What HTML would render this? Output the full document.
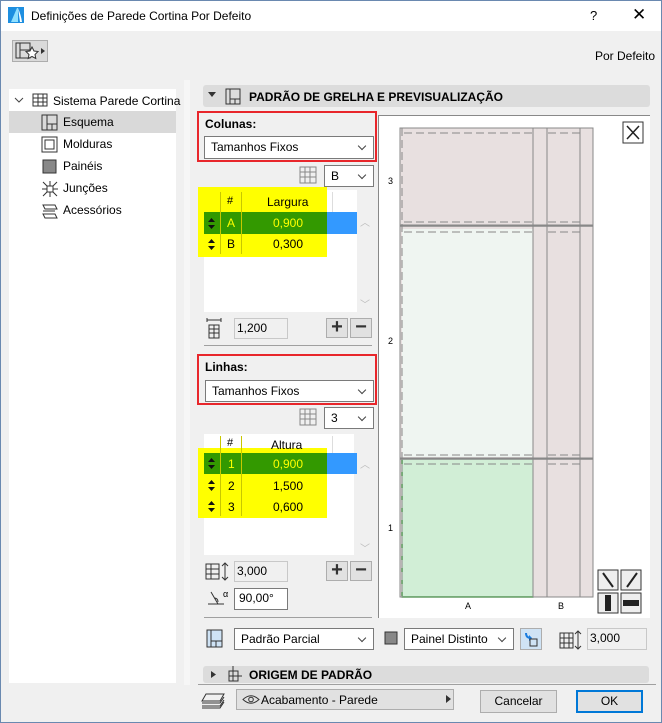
<!DOCTYPE html>
<html><head><meta charset="utf-8"><style>
*{box-sizing:border-box;margin:0;padding:0}
body{width:662px;height:723px;overflow:hidden;background:#f0f0f0;font-family:"Liberation Sans",sans-serif;font-size:12px;color:#000;position:relative}
.a{position:absolute}
.dd{position:absolute;background:#fff;border:1px solid #7a7a7a;padding-left:6px;line-height:20px;font-size:12px}
.dd:after{content:"";position:absolute;right:8px;top:6px;width:5px;height:5px;border-right:1px solid #444;border-bottom:1px solid #444;transform:rotate(45deg)}
.inp{position:absolute;border:1px solid #c8c8c8;background:#f0f0f0;line-height:19px;padding-left:2px;font-size:12px}
.btn{position:absolute;border:1px solid #adadad;background:#e1e1e1;text-align:center}
.t{position:absolute;font-size:12px;white-space:nowrap}
.red{position:absolute;border:2px solid #e8262b}
.pm{position:absolute;width:22px;height:20px;border:1px solid #adadad;background:#e1e1e1;font-size:20px;line-height:17px;text-align:center;font-weight:bold;color:#333}
.ar{position:absolute;width:7px;height:11px}
</style></head><body>
<div class="a" style="left:0;top:0;width:662px;height:31px;background:#fff"></div>
<svg class="a" style="left:8px;top:7px" width="16" height="16"><rect width="16" height="16" fill="#1e8fe0"/><path d="M3 15 L9 1 L10 1 L10 15Z" fill="#8fe0ff"/><path d="M10 1 Q13 8 14 15 L12 15Z" fill="#fff"/></svg>
<div class="t" style="left:31px;top:9px;font-size:12px">Definições de Parede Cortina Por Defeito</div>
<div class="t" style="left:590px;top:8px;font-size:13px">?</div>
<div class="t" style="left:632px;top:5px;font-size:17px">✕</div>
<div class="a" style="left:0;top:0;width:662px;height:723px;border:1px solid #6a89b0;pointer-events:none;z-index:9"></div>
<div class="a" style="left:12px;top:40px;width:36px;height:22px;border:1px solid #adadad;background:#dadada"></div>
<svg class="a" style="left:15px;top:42px" width="32" height="18"><rect x="1" y="1" width="14" height="15" fill="none" stroke="#333"/><path d="M5 1V16M5 8H15" stroke="#333" fill="none"/><path d="M17 5l2 4 4 .5-3 3 .8 4-3.8-2-3.8 2 .8-4-3-3 4-.5z" fill="#fff" stroke="#333"/><path d="M26 6l4 3-4 3z" fill="#333"/></svg>
<div class="t" style="left:595px;top:49px">Por Defeito</div>
<div class="a" style="left:9px;top:89px;width:167px;height:594px;background:#fff"></div>
<div class="a" style="left:184px;top:80px;width:6px;height:605px;background:#f6f6f6"></div>
<div class="a" style="left:9px;top:111px;width:167px;height:22px;background:#d9d9d9"></div>
<svg class="a" style="left:14px;top:96px" width="10" height="8"><path d="M1 2l4 4 4-4" stroke="#444" fill="none"/></svg>
<svg class="a" style="left:31px;top:92px" width="18" height="16"><path d="M2 2H16V14H2Z M2 6H16M2 10H16M7 2V14M12 2V14" stroke="#333" fill="none"/></svg>
<div class="t" style="left:53px;top:94px">Sistema Parede Cortina</div>
<svg class="a" style="left:41px;top:114px" width="18" height="18"><path d="M1 1H16V16H1Z M6 1V16M6 10H16M11 10V16" stroke="#333" fill="none"/></svg>
<div class="t" style="left:63px;top:115px">Esquema</div>
<svg class="a" style="left:41px;top:136px" width="18" height="18"><rect x="1" y="1" width="15" height="15" fill="none" stroke="#333"/><rect x="4" y="4" width="9" height="9" fill="none" stroke="#333"/></svg>
<div class="t" style="left:63px;top:137px">Molduras</div>
<svg class="a" style="left:41px;top:158px" width="18" height="18"><rect x="2" y="2" width="13" height="13" fill="#888" stroke="#333"/></svg>
<div class="t" style="left:63px;top:159px">Painéis</div>
<svg class="a" style="left:41px;top:180px" width="18" height="18"><path d="M2 2L16 16M16 2L2 16M9 1V17M1 9H17" stroke="#333"/><rect x="6" y="6" width="6" height="6" fill="#fff" stroke="#333"/></svg>
<div class="t" style="left:63px;top:181px">Junções</div>
<svg class="a" style="left:41px;top:202px" width="18" height="18"><path d="M2 3H14L16 7H4ZM2 9H14M2 12H14L16 16H4Z" stroke="#333" fill="none"/></svg>
<div class="t" style="left:63px;top:203px">Acessórios</div>
<div class="a" style="left:203px;top:85px;width:447px;height:22px;background:#dcdcdc;border-radius:3px"></div>
<svg class="a" style="left:208px;top:92px" width="8" height="6"><path d="M0 0H8L4 5Z" fill="#333"/></svg>
<svg class="a" style="left:225px;top:88px" width="16" height="17"><path d="M1 1H15V16H1ZM5 1V16M5 11H15M10 11V16" stroke="#333" fill="none"/></svg>
<div class="t" style="left:249px;top:90px;font-weight:bold">PADRÃO DE GRELHA E PREVISUALIZAÇÃO</div>
<div class="red" style="left:197px;top:111px;width:180px;height:51px"></div>
<div class="t" style="left:205px;top:117px;font-weight:bold">Colunas:</div>
<div class="dd" style="left:204px;top:136px;width:170px;height:23px">Tamanhos Fixos</div>
<svg class="a" style="left:299px;top:166px" width="18" height="18"><path d="M1 1H17V17H1ZM1 6H17M1 11H17M6 1V17M11 1V17" stroke="#888" fill="none"/></svg>
<div class="dd" style="left:324px;top:165px;width:50px;height:22px">B</div>
<div class="a" style="left:204px;top:190px;width:153px;height:122px;background:#fff"></div>
<div class="a" style="left:198px;top:187px;width:129px;height:70px;background:#ffff00"></div>
<div class="a" style="left:204px;top:212px;width:123px;height:22px;background:#339900"></div>
<div class="a" style="left:327px;top:212px;width:30px;height:22px;background:#3399ff"></div>
<div class="a" style="left:220px;top:192px;width:1px;height:62px;background:#c8c800"></div>
<div class="a" style="left:241px;top:192px;width:1px;height:62px;background:#c8c800"></div>
<div class="a" style="left:332px;top:192px;width:1px;height:20px;background:#ddd"></div>
<div class="t" style="left:227px;top:195px;font-size:11px">#</div>
<div class="t" style="left:267px;top:195px">Largura</div>
<svg class="ar" style="left:208px;top:218px" viewBox="0 0 7 11"><path d="M0 4L3.5 0 7 4ZM0 7L3.5 11 7 7Z" fill="#111"/></svg>
<div class="t" style="left:227px;top:216px;color:#ff0">A</div>
<div class="t" style="left:273px;top:216px;color:#ff0">0,900</div>
<svg class="ar" style="left:208px;top:239px" viewBox="0 0 7 11"><path d="M0 4L3.5 0 7 4ZM0 7L3.5 11 7 7Z" fill="#111"/></svg>
<div class="t" style="left:227px;top:237px">B</div>
<div class="t" style="left:273px;top:237px">0,300</div>
<div class="t" style="left:360px;top:214px;color:#bbb;font-size:10px">︿</div>
<div class="t" style="left:360px;top:296px;color:#bbb;font-size:10px">﹀</div>
<svg class="a" style="left:206px;top:317px" width="18" height="22"><path d="M1 3H15M1 1V5M15 1V5M3 8H13V21H3ZM3 12H13M3 16H13M8 8V21" stroke="#333" fill="none"/></svg>
<div class="inp" style="left:234px;top:318px;width:54px;height:21px">1,200</div>
<div class="pm" style="left:326px;top:318px">+</div>
<div class="pm" style="left:350px;top:318px">−</div>
<div class="a" style="left:204px;top:345px;width:168px;height:1px;background:#a0a0a0"></div>
<div class="red" style="left:197px;top:354px;width:180px;height:51px"></div>
<div class="t" style="left:205px;top:360px;font-weight:bold">Linhas:</div>
<div class="dd" style="left:205px;top:380px;width:169px;height:22px">Tamanhos Fixos</div>
<svg class="a" style="left:299px;top:408px" width="18" height="18"><path d="M1 1H17V17H1ZM1 6H17M1 11H17M6 1V17M11 1V17" stroke="#888" fill="none"/></svg>
<div class="dd" style="left:324px;top:407px;width:50px;height:22px">3</div>
<div class="a" style="left:204px;top:434px;width:150px;height:121px;background:#fff"></div>
<div class="a" style="left:198px;top:448px;width:129px;height:70px;background:#ffff00"></div>
<div class="a" style="left:204px;top:453px;width:123px;height:21px;background:#339900"></div>
<div class="a" style="left:327px;top:453px;width:30px;height:21px;background:#3399ff"></div>
<div class="a" style="left:220px;top:436px;width:1px;height:80px;background:#c8c800"></div>
<div class="a" style="left:241px;top:436px;width:1px;height:80px;background:#c8c800"></div>
<div class="a" style="left:332px;top:436px;width:1px;height:17px;background:#ddd"></div>
<div class="t" style="left:227px;top:437px;font-size:11px">#</div>
<div class="t" style="left:271px;top:438px">Altura</div>
<svg class="ar" style="left:208px;top:458px" viewBox="0 0 7 11"><path d="M0 4L3.5 0 7 4ZM0 7L3.5 11 7 7Z" fill="#111"/></svg>
<div class="t" style="left:228px;top:457px;color:#ff0">1</div>
<div class="t" style="left:273px;top:457px;color:#ff0">0,900</div>
<svg class="ar" style="left:208px;top:480px" viewBox="0 0 7 11"><path d="M0 4L3.5 0 7 4ZM0 7L3.5 11 7 7Z" fill="#111"/></svg>
<div class="t" style="left:228px;top:479px">2</div>
<div class="t" style="left:273px;top:479px">1,500</div>
<svg class="ar" style="left:208px;top:501px" viewBox="0 0 7 11"><path d="M0 4L3.5 0 7 4ZM0 7L3.5 11 7 7Z" fill="#111"/></svg>
<div class="t" style="left:228px;top:500px">3</div>
<div class="t" style="left:273px;top:500px">0,600</div>
<div class="t" style="left:360px;top:456px;color:#bbb;font-size:10px">︿</div>
<div class="t" style="left:360px;top:540px;color:#bbb;font-size:10px">﹀</div>
<svg class="a" style="left:205px;top:562px" width="26" height="20"><path d="M1 2H14V17H1ZM1 7H14M1 12H14M6 2V17M20 1V18M17 4L20 1 23 4M17 15L20 18 23 15" stroke="#333" fill="none"/></svg>
<div class="inp" style="left:234px;top:561px;width:54px;height:21px">3,000</div>
<div class="pm" style="left:326px;top:561px">+</div>
<div class="pm" style="left:350px;top:561px">−</div>
<svg class="a" style="left:205px;top:588px" width="26" height="20"><path d="M3 16H19M6 4L13 16M9 10Q13 10 13 14" stroke="#333" fill="none"/><text x="18" y="9" font-size="9" font-family="Liberation Sans">α</text></svg>
<div class="inp" style="left:234px;top:588px;width:54px;height:22px;background:#fff;border-color:#7a7a7a;padding-left:4px">90,00°</div>
<div class="a" style="left:204px;top:617px;width:168px;height:1px;background:#a0a0a0"></div>
<div class="a" style="left:378px;top:115px;width:272px;height:503px;background:#fff;border-left:1px solid #888;border-top:1px solid #888"></div>
<svg class="a" style="left:380px;top:115px" width="270" height="500">
<rect x="20" y="13" width="193" height="469" fill="#e8e0e0" stroke="#888"/>
<rect x="22" y="17" width="131" height="93" fill="#e8e0e0"/>
<rect x="22" y="114" width="131" height="228" fill="#eff5f1"/>
<rect x="22" y="344" width="131" height="138" fill="#d1eed6" stroke="#1a6b1a"/>
<path d="M153 13V482M167 13V482M200 13V482M20 110H213M20 343H213" stroke="#888"/>
<path d="M20 111H213M20 344H213" stroke="#888" stroke-width="1.5"/>
<g stroke="#888" stroke-dasharray="8,4" fill="none"><path d="M22 13V482M24 18H153M24 107H153M24 117H153M24 340H153M24 349H153M168 18H200M168 107H200M168 117H200M168 340H200M168 349H200"/></g>
<text x="8" y="69" font-size="9" font-family="Liberation Sans">3</text>
<text x="8" y="229" font-size="9" font-family="Liberation Sans">2</text>
<text x="8" y="416" font-size="9" font-family="Liberation Sans">1</text>
<text x="85" y="494" font-size="9" font-family="Liberation Sans">A</text>
<text x="178" y="494" font-size="9" font-family="Liberation Sans">B</text>
<rect x="243" y="7" width="20" height="21" fill="#fff" stroke="#333"/><path d="M247 11L259 24M259 11L247 24" stroke="#222" stroke-width="1.5"/>
<g stroke="#333" fill="#eee"><rect x="218" y="455" width="20" height="20"/><rect x="241" y="455" width="20" height="20"/><rect x="218" y="478" width="20" height="20"/><rect x="241" y="478" width="20" height="20"/></g>
<path d="M223 458L233 472M257 458L247 472" stroke="#222" stroke-width="2"/>
<rect x="225" y="480" width="6" height="16" fill="#222"/><rect x="243" y="485" width="16" height="6" fill="#222"/>
</svg>
<svg class="a" style="left:206px;top:629px" width="18" height="20"><rect x="1" y="1" width="15" height="17" fill="#cfe3f5" stroke="#333"/><path d="M5 1V18M5 12H16M10 12V18" stroke="#333" fill="none"/></svg>
<div class="dd" style="left:234px;top:628px;width:140px;height:22px">Padrão Parcial</div>
<svg class="a" style="left:383px;top:630px" width="16" height="16"><rect x="2" y="2" width="12" height="12" fill="#888" stroke="#333"/></svg>
<div class="dd" style="left:404px;top:628px;width:110px;height:22px">Painel Distinto</div>
<div class="a" style="left:520px;top:628px;width:22px;height:22px;border:1px solid #adadad;background:#cfe3f5"></div>
<svg class="a" style="left:523px;top:631px" width="16" height="16"><path d="M3 2Q3 7 8 7" stroke="#1a7de0" stroke-width="2" fill="none"/><path d="M6 4L9 7 6 10z" fill="#1a7de0"/><rect x="7" y="8" width="7" height="7" fill="none" stroke="#333"/></svg>
<svg class="a" style="left:559px;top:630px" width="24" height="20"><path d="M1 3H14V18H1ZM1 8H14M1 13H14M5 3V18M10 3V18M19 1V19M16 4L19 1 22 4M16 16L19 19 22 16" stroke="#333" fill="none"/></svg>
<div class="inp" style="left:587px;top:628px;width:60px;height:22px">3,000</div>
<div class="a" style="left:203px;top:666px;width:446px;height:17px;background:#dcdcdc;border-radius:3px"></div>
<svg class="a" style="left:211px;top:671px" width="5" height="7"><path d="M0 0L5 3.5 0 7Z" fill="#333"/></svg>
<svg class="a" style="left:225px;top:666px" width="18" height="17"><path d="M4 5H13V15H4ZM4 10H13M8 5V15M8 0V5M13 10H17" stroke="#333" fill="none"/></svg>
<div class="t" style="left:249px;top:668px;font-weight:bold">ORIGEM DE PADRÃO</div>
<div class="a" style="left:198px;top:684px;width:458px;height:1px;background:#a0a0a0"></div>
<svg class="a" style="left:200px;top:692px" width="26" height="18"><path d="M6 2H24L20 9H2ZM2 11H20L24 5M2 14H20L24 8M2 16H20L24 10" stroke="#333" fill="none"/></svg>
<div class="a" style="left:236px;top:689px;width:218px;height:21px;border:1px solid #adadad;background:#e1e1e1"></div>
<svg class="a" style="left:242px;top:694px" width="18" height="11"><path d="M1 5.5Q9 -2 17 5.5Q9 13 1 5.5Z" stroke="#333" fill="none"/><circle cx="9" cy="5.5" r="2.3" fill="none" stroke="#333"/></svg>
<div class="t" style="left:261px;top:693px">Acabamento - Parede</div>
<svg class="a" style="left:446px;top:695px" width="5" height="8"><path d="M0 0L5 4 0 8Z" fill="#333"/></svg>
<div class="btn" style="left:480px;top:690px;width:77px;height:23px;line-height:21px">Cancelar</div>
<div class="btn" style="left:576px;top:690px;width:67px;height:23px;line-height:19px;border:2px solid #0078d7">OK</div>
</body></html>
